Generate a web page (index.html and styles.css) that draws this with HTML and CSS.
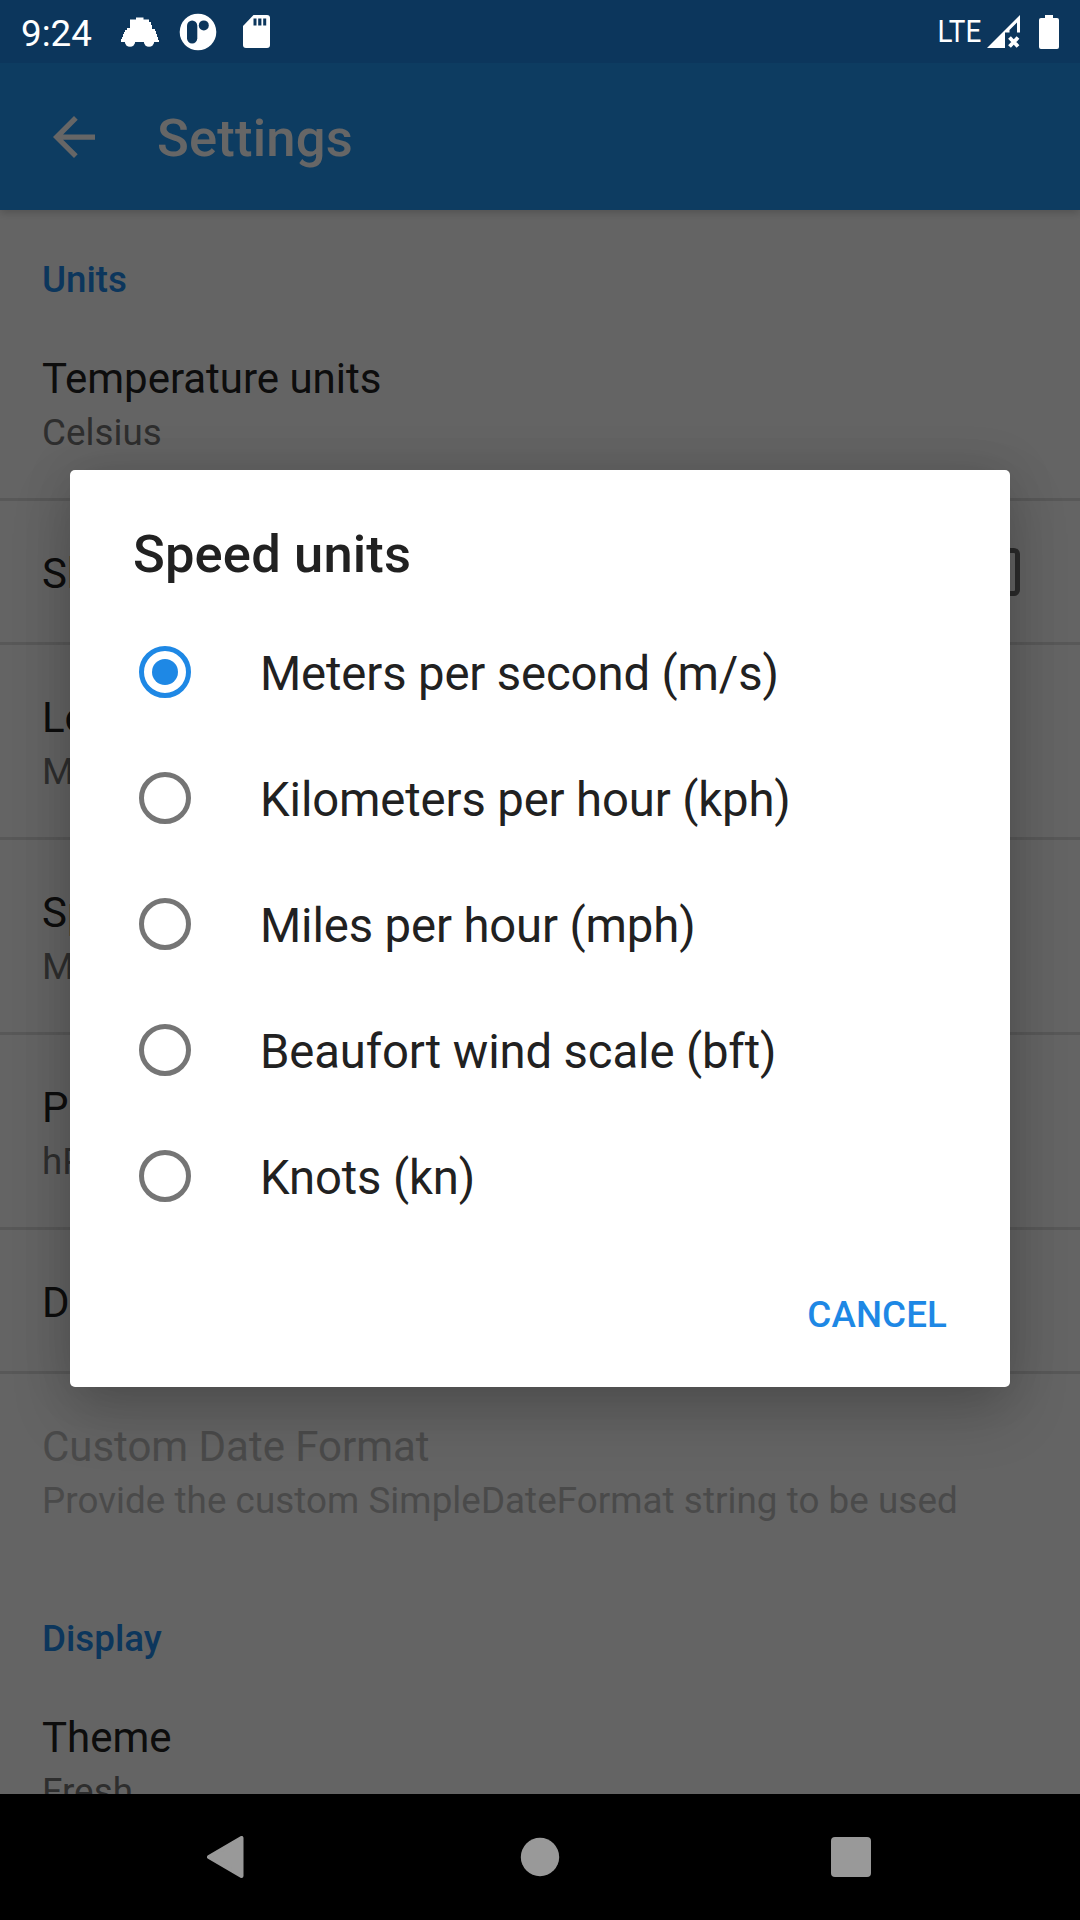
FILE: index.html
```html
<!DOCTYPE html>
<html lang="en">
<head>
<meta charset="utf-8">
<title>Settings</title>
<link rel="stylesheet" href="styles.css">
</head>
<body>
<div class="screen">
  <header class="status-bar">
    <span class="clock">9:24</span>
    <svg class="icon-car" width="38" height="30" viewBox="0 0 38 30" fill="#fff"><path d="M9 2.500H15V.5h7.500v2H28V5h2v3h1v4h3v2h1v3h1v3h1v3h1v2H0v-3h1v-2h1v-3h1v-2h1v-2h2v-2h3z"/><circle cx="9" cy="24.500" r="5.200"/><circle cx="28" cy="24.500" r="5.200"/></svg>
    <svg class="icon-p" width="38" height="38" viewBox="0 0 38 38"><circle cx="19" cy="19" r="18.300" fill="#fff"/><rect x="8" y="7.500" width="10.300" height="23" rx="5.150" fill="#0c365c"/><circle cx="24.800" cy="12.400" r="5" fill="#0c365c"/></svg>
    <svg class="icon-sd" width="27" height="33" viewBox="0 0 27 33"><path d="M10.500 0H24a3 3 0 0 1 3 3v27a3 3 0 0 1-3 3H3a3 3 0 0 1-3-3V11z" fill="#fff"/><path d="M10.500 3.500h3v7h-3zM15.200 3.500h3.200v7h-3.200zM20.200 3.500h3v7h-3z" fill="#0c365c"/></svg>
    <span class="network">LTE</span>
    <svg class="icon-signal" width="33" height="33" viewBox="0 0 33 33"><path d="M0 33 33 0v17.500h-3V7.500L22.500 15v2.500H18V33z" fill="#fff"/><path d="m22.500 22.500 8.500 9m0-9-8.500 9" stroke="#fff" stroke-width="3.800"/></svg>
    <svg class="icon-battery" width="20" height="34" viewBox="0 0 20 34"><path d="M6 0h8v3h4a2 2 0 0 1 2 2v27a2 2 0 0 1-2 2H2a2 2 0 0 1-2-2V5a2 2 0 0 1 2-2h4z" fill="#fff"/></svg>
  </header>

  <div class="page">
    <div class="app-bar">
      <svg class="back" width="42" height="42" viewBox="4 4 16 16" fill="#fff"><path d="M20 11H7.830l5.590-5.590L12 4l-8 8 8 8 1.410-1.410L7.830 13H20v-2z"/></svg>
      <h1 class="app-title">Settings</h1>
    </div>
    <main class="list">
      <h2 class="category">Units</h2>
      <div class="row"><div class="row-title">Temperature units</div><div class="row-summary">Celsius</div></div>
      <div class="row row-check"><div class="row-title">Show</div><span class="checkbox"></span></div>
      <div class="row"><div class="row-title">Length</div><div class="row-summary">Millimeters</div></div>
      <div class="row"><div class="row-title">Speed units</div><div class="row-summary">Meters</div></div>
      <div class="row"><div class="row-title">Pressure</div><div class="row-summary">hPa</div></div>
      <div class="row"><div class="row-title">Date</div></div>
      <div class="row disabled"><div class="row-title">Custom Date Format</div><div class="row-summary">Provide the custom SimpleDateFormat string to be used</div></div>
      <h2 class="category">Display</h2>
      <div class="row"><div class="row-title">Theme</div><div class="row-summary">Fresh</div></div>
    </main>
  </div>

  <div class="scrim">
    <section class="dialog">
      <h2 class="dialog-title">Speed units</h2>
      <div class="options">
        <div class="option"><span class="radio checked"></span><span class="label">Meters per second (m/s)</span></div>
        <div class="option"><span class="radio"></span><span class="label">Kilometers per hour (kph)</span></div>
        <div class="option"><span class="radio"></span><span class="label">Miles per hour (mph)</span></div>
        <div class="option"><span class="radio"></span><span class="label">Beaufort wind scale (bft)</span></div>
        <div class="option"><span class="radio"></span><span class="label">Knots (kn)</span></div>
      </div>
      <div class="actions"><span class="cancel">CANCEL</span></div>
    </section>
  </div>

  <nav class="nav-bar">
    <svg width="38" height="42" viewBox="0 0 38 42"><path d="M2 21 34.500 2v38z" fill="#999" stroke="#999" stroke-width="4" stroke-linejoin="round"/></svg>
    <svg class="home" width="40" height="40" viewBox="0 0 40 40"><circle cx="20" cy="20" r="19.200" fill="#999"/></svg>
    <svg width="40" height="40" viewBox="0 0 40 40"><rect width="40" height="40" rx="4" fill="#999"/></svg>
  </nav>
</div>
</body>
</html>
```
FILE: styles.css
```css
* { box-sizing: border-box; }
body { margin: 0; font-family: Roboto, sans-serif; background: #000; }
h1, h2 { margin: 0; font-weight: 500; }
svg { display: block; flex: none; }

.screen {
  position: relative;
  display: flex;
  flex-direction: column;
  width: 1080px;
  height: 1920px;
  overflow: hidden;
}

/* System status bar */
.status-bar {
  display: flex;
  align-items: center;
  flex: none;
  position: relative;
  z-index: 2;
  height: 63px;
  padding: 0 21px;
  color: #fff;
  background: #0c365c;
}
.clock { width: 100px; font-size: 36.75px; line-height: 63px; padding-top: 3px; }
.icon-car { margin-top: 1px; }
.icon-p { margin-left: 20px; }
.icon-sd { margin-left: 26px; }
.network {
  margin-left: auto;
  font-size: 32px;
  line-height: 63px;
  transform: scaleX(.87);
  transform-origin: right center;
}
.icon-signal { margin: 0 19px 0 6px; }

/* Settings page */
.page { display: flex; flex-direction: column; flex: 1; min-height: 0; background: #fafafa; }
.app-bar {
  display: flex;
  align-items: center;
  flex: none;
  position: relative;
  height: 147px;
  padding-left: 53px;
  background: #2196f3;
  box-shadow: 0 3px 8px rgba(0, 0, 0, .18);
}
.app-title { margin-left: 62px; padding-top: 3px; font-size: 52.5px; line-height: 62px; letter-spacing: .2px; color: #fff; }
.list { flex: 1; min-height: 0; overflow: hidden; }
.category {
  height: 96px;
  padding: 44px 42px 0;
  font-size: 36.75px;
  line-height: 51px;
  color: #1e88e5;
}
.row { padding: 44px 42px 40px; border-bottom: 3px solid #dcdcdc; white-space: nowrap; }
.row-title { font-size: 42px; line-height: 57px; letter-spacing: -.02px; color: #212121; }
.row-summary { font-size: 36.75px; line-height: 51px; letter-spacing: .06px; color: #737373; }
.row-check { display: flex; justify-content: space-between; }
.checkbox { width: 48px; height: 48px; margin: 3px 18px 0 0; border: 5px solid #6b6b6b; border-radius: 6px; }
.disabled { border-color: transparent; }
.disabled .row-title, .disabled .row-summary { color: #b9b9b9; }

/* Dialog */
.scrim {
  position: absolute;
  inset: 63px 0 126px;
  display: flex;
  align-items: center;
  justify-content: center;
  background: rgba(0, 0, 0, .6);
}
.dialog {
  display: flex;
  flex-direction: column;
  width: 940px;
  height: 917px;
  border-radius: 5px;
  background: #fff;
  box-shadow: 0 26px 60px rgba(0, 0, 0, .18), 0 0 50px rgba(0, 0, 0, .12);
}
.dialog-title { padding: 53px 63px 0; height: 139px; font-size: 52.5px; line-height: 62px; letter-spacing: .15px; color: #212121; }
.option { display: flex; align-items: center; height: 126px; padding-left: 69px; }
.radio {
  display: flex;
  align-items: center;
  justify-content: center;
  width: 52px;
  height: 52px;
  border: 5px solid #757575;
  border-radius: 50%;
}
.radio.checked { border-color: #1e88e5; }
.radio.checked::after { content: ""; width: 26px; height: 26px; border-radius: 50%; background: #1e88e5; }
.label { margin-left: 69px; padding-top: 4px; font-size: 47.25px; line-height: 60px; letter-spacing: -.13px; color: #212121; }
.actions { display: flex; justify-content: flex-end; padding: 51px 63px 0; }
.cancel { font-size: 36.75px; font-weight: 500; line-height: 50px; letter-spacing: .1px; color: #1e88e5; }

/* System navigation bar */
.nav-bar {
  display: flex;
  align-items: center;
  flex: none;
  position: relative;
  height: 126px;
  padding-left: 207px;
  background: #000;
}
.home { margin: 0 271px 0 275px; }
```
